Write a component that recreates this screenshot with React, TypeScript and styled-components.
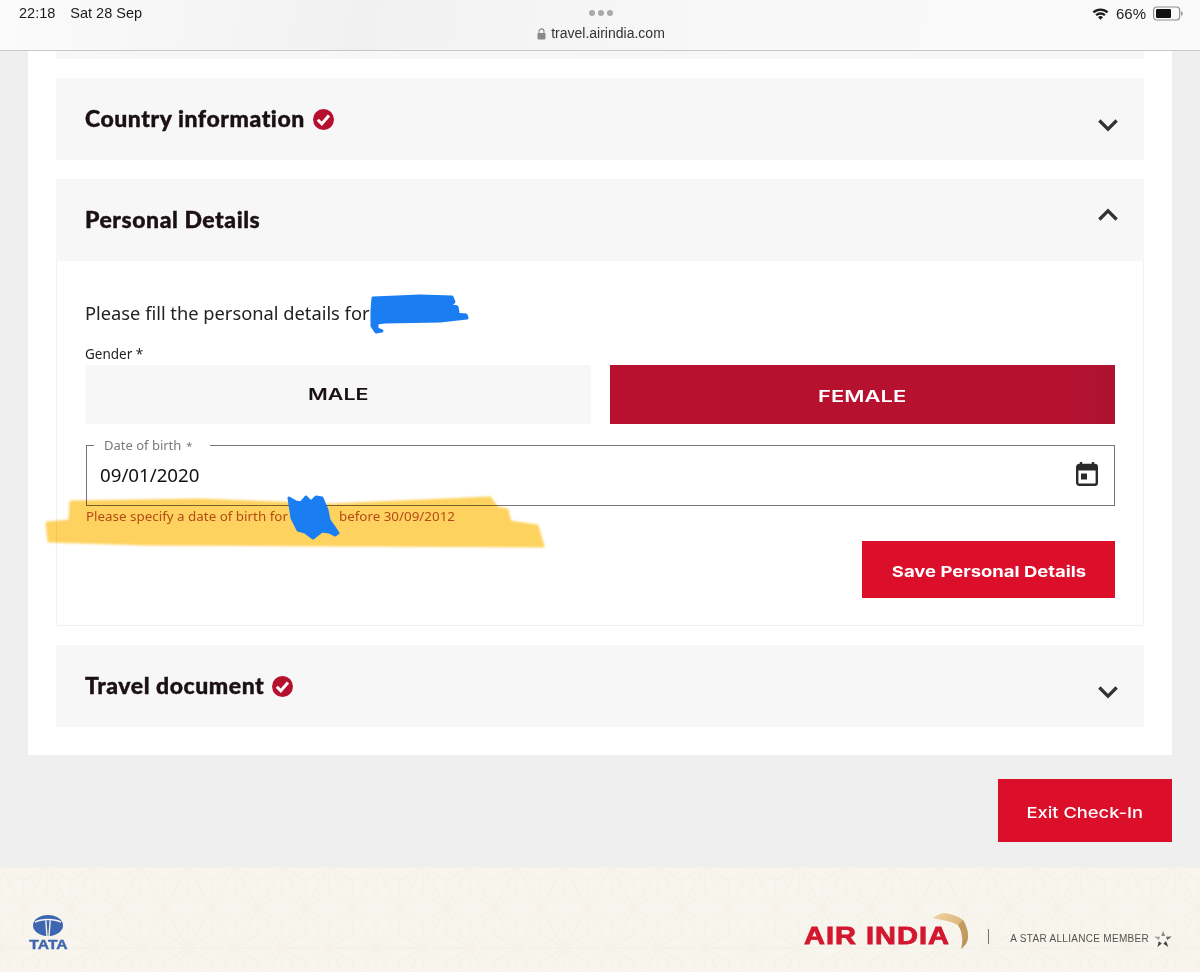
import { ReactNode } from 'react'
import styled, { createGlobalStyle } from 'styled-components'

const GlobalStyle = createGlobalStyle`
  html, body {
    margin: 0;
    padding: 0;
    background: #efefef;
  }
  * {
    box-sizing: border-box;
  }
`

// asanoha tile for the footer
const footerPattern = encodeURIComponent(
  `<svg xmlns="http://www.w3.org/2000/svg" width="47" height="81.4" viewBox="0 0 47 81.4"><g fill="none" stroke="#f5f1e8" stroke-width="1.3"><path d="M0 0H47M0 81.4H47M0 0L47 81.4M47 0L0 81.4"/><path d="M23.5 13.57L0 0M23.5 13.57L47 0M23.5 13.57V40.7M23.5 67.83L0 81.4M23.5 67.83L47 81.4M23.5 67.83V40.7M0 27.13V0M0 27.13L23.5 40.7M47 27.13V0M47 27.13L23.5 40.7M0 54.27V81.4M0 54.27L23.5 40.7M47 54.27V81.4M47 54.27L23.5 40.7"/></g></svg>`,
)

const Page = styled.div`
  position: relative;
  width: 1200px;
  height: 972px;
  overflow: hidden;
  display: flex;
  flex-direction: column;
  background: #efefef;
  font-family: 'Noto Sans', sans-serif;
`

const StatusBar = styled.header`
  height: 51px;
  flex: none;
  display: grid;
  grid-template-columns: 1fr auto 1fr;
  padding: 0 17px 0 19px;
  background: linear-gradient(100deg, #fbfbfb 0%, #f1f1f1 30%, #f8f8f8 60%, #fafafa 100%);
  border-bottom: 1px solid #c9c9c9;
  font-family: 'Liberation Sans', sans-serif;
  color: #1c1c1c;
`

const StatusLeft = styled.div`
  display: flex;
  gap: 15px;
  padding-top: 5px;
  font-size: 14.5px;
  line-height: 17px;
`

const AddressBlock = styled.div`
  display: flex;
  flex-direction: column;
  align-items: center;
  padding-top: 10px;
`

const Dots = styled.div`
  display: flex;
  gap: 3px;
  margin-bottom: 9px;
`

const Dot = styled.span`
  width: 6px;
  height: 6px;
  border-radius: 50%;
  background: #a9a9a9;
`

const Address = styled.div`
  display: flex;
  align-items: center;
  gap: 5px;
  font-size: 14px;
  line-height: 17px;
  color: #333;
`

const StatusRight = styled.div`
  display: flex;
  justify-content: flex-end;
  align-items: flex-start;
  gap: 5px;
  padding-top: 5px;
  font-size: 15px;
  line-height: 17px;
`

const WifiIcon = styled.svg`
  margin: 2px 2px 0 0;
`

const BatteryIcon = styled.svg`
  margin: 1px 0 0 2px;
`

const Main = styled.main`
  flex: none;
  height: 816px;
  padding: 0 28px;
  display: flex;
  flex-direction: column;
`

const Panel = styled.section`
  height: 704px;
  padding: 0 28px;
  background: #fff;
  display: flex;
  flex-direction: column;
  gap: 19px;
`

const ClippedItem = styled.div`
  height: 8px;
  background: #f7f7f7;
`

const Item = styled.div`
  display: flex;
  flex-direction: column;
`

const ItemHeader = styled.div`
  height: 82px;
  padding: 0 26px 0 29px;
  display: flex;
  align-items: center;
  justify-content: space-between;
  background: #f7f7f7;
`

const ItemTitle = styled.h2`
  margin: 0 0 3px;
  display: flex;
  align-items: center;
  gap: 8px;
  font-family: 'Lato', sans-serif;
  font-size: 23px;
  font-weight: 900;
  letter-spacing: 0.55px;
  color: #1b1012;
  -webkit-text-stroke: 0.4px #1b1012;
`

const BadgeIcon = styled.svg`
  margin-top: 4px;
`

const ChevronBox = styled.span<{ $up?: boolean }>`
  display: flex;
  margin-top: ${({ $up }) => ($up ? '-12px' : '12px')};
`

const ItemBody = styled.div`
  height: 365px;
  padding: 0 28px;
  border: 1px solid #f1f1f1;
  border-top: 0;
  display: flex;
  flex-direction: column;
`

const Intro = styled.p`
  margin: 40px 0 0;
  font-size: 18.3px;
  line-height: 24px;
  color: #222;
`

const FieldLabel = styled.div`
  margin-top: 20px;
  font-size: 13.5px;
  line-height: 18px;
  color: #222;
`

const GenderRow = styled.div`
  display: grid;
  grid-template-columns: 506px 505px;
  gap: 19px;
  margin-top: 2px;
`

const GenderButton = styled.div<{ $selected?: boolean }>`
  height: 59px;
  display: flex;
  align-items: center;
  justify-content: center;
  padding-top: ${({ $selected }) => ($selected ? '3px' : '0')};
  padding-bottom: ${({ $selected }) => ($selected ? '0' : '2px')};
  background: ${({ $selected }) => ($selected ? 'linear-gradient(90deg, #b81130, #b5112f 88%, #ad132f)' : '#f7f7f7')};
  color: ${({ $selected }) => ($selected ? '#fff' : '#1b1012')};
`

const WideLabel = styled.span<{ $size: number; $weight: number; $stretch: number }>`
  display: inline-block;
  font-family: 'Inter', sans-serif;
  font-size: ${({ $size }) => $size}px;
  font-weight: ${({ $weight }) => $weight};
  transform: scaleX(${({ $stretch }) => $stretch});
`

const DateField = styled.fieldset`
  margin: 14px 0 0 1px;
  padding: 0 16px 0 13px;
  height: 68px;
  border: 1px solid #777;
  border-radius: 0;
`

const DateLegend = styled.legend`
  margin-left: -6px;
  padding: 0 18px 0 10px;
  font-size: 13px;
  line-height: 14px;
  color: #7a7a7a;
`

const SmallStar = styled.span`
  margin-left: 5px;
  font-size: 11px;
`

const DateRow = styled.div`
  height: 42px;
  display: flex;
  align-items: center;
  justify-content: space-between;
`

const DateValue = styled.span`
  font-size: 18.7px;
  color: #111;
`

const ErrorText = styled.div`
  margin-top: 1px;
  margin-left: 1px;
  display: flex;
  font-size: 13.4px;
  line-height: 18px;
  color: #b85a3c;
`

const NameGap = styled.span`
  width: 51px;
`

const ActionRow = styled.div`
  display: flex;
  justify-content: flex-end;
  margin-top: 16px;
`

const PrimaryButton = styled.button<{ $width: number; $height: number }>`
  width: ${({ $width }) => $width}px;
  height: ${({ $height }) => $height}px;
  border: 0;
  padding: 3px 0 0;
  background: #dc0f2b;
  color: #fff;
`

const ExitRow = styled.div`
  display: flex;
  justify-content: flex-end;
  margin-top: 24px;
`

const Footer = styled.footer`
  flex: 1;
  padding: 0 28px;
  display: flex;
  align-items: flex-start;
  justify-content: space-between;
  background-color: #f8f5ee;
  background-image: url("data:image/svg+xml,${footerPattern}");
`

const TataLogo = styled.div`
  margin-top: 48px;
  width: 40px;
  display: flex;
  flex-direction: column;
  align-items: center;
`

const TataWord = styled.span`
  font-family: 'Liberation Sans', sans-serif;
  font-size: 13.5px;
  font-weight: 700;
  line-height: 12px;
  margin-top: 3px;
  color: #3f67b1;
  -webkit-text-stroke: 0.4px #3f67b1;
  transform: scaleX(1.16);
`

const Brand = styled.div`
  display: flex;
  align-items: center;
  margin-top: 46px;
`

const AirIndiaMark = styled.div`
  position: relative;
  display: flex;
  width: 164px;
  height: 40px;
  align-items: center;
`

const AirIndiaWord = styled.span`
  font-family: 'Liberation Sans', sans-serif;
  font-size: 23px;
  font-weight: 700;
  line-height: 24px;
  margin-top: 6px;
  letter-spacing: 0.8px;
  color: #d3172e;
  -webkit-text-stroke: 0.8px #d3172e;
  transform: scaleX(1.26);
  transform-origin: left center;
  white-space: nowrap;
`

const Swoosh = styled.svg`
  position: absolute;
  left: 127px;
  top: -3px;
`

const BrandDivider = styled.span`
  width: 1px;
  height: 15px;
  margin: 6px 21px 0 20px;
  background: #77736b;
`

const Alliance = styled.span`
  display: flex;
  align-items: center;
  gap: 5px;
  margin-top: 11px;
  font-family: 'Liberation Sans', sans-serif;
  font-size: 10px;
  letter-spacing: 0.3px;
  color: #55524d;
`

const ScribbleLayer = styled.svg`
  position: absolute;
  left: 0;
  top: 0;
  pointer-events: none;
`

const YellowMarks = styled.g`
  mix-blend-mode: multiply;
  filter: blur(1px);
`

const CheckBadge = () => (
  <BadgeIcon width="21" height="21" viewBox="0 0 21 21">
    <circle cx="10.5" cy="10.5" r="10.5" fill="#b5112f" />
    <path d="M4.8 10.8l4 4 7.2-8.2" fill="none" stroke="#fff" strokeWidth="3" />
  </BadgeIcon>
)

const Chevron = ({ up }: { up?: boolean }) => (
  <ChevronBox $up={up}>
    <svg width="20" height="13" viewBox="0 0 22 14">
      <path
        d={up ? 'M1.5 12.5L11 3l9.5 9.5' : 'M1.5 1.5L11 11l9.5-9.5'}
        fill="none"
        stroke="#333"
        strokeWidth="3.6"
      />
    </svg>
  </ChevronBox>
)

const Section = ({ title, done, up, children }: { title: string; done?: boolean; up?: boolean; children?: ReactNode }) => (
  <Item>
    <ItemHeader>
      <ItemTitle>
        {title}
        {done && <CheckBadge />}
      </ItemTitle>
      <Chevron up={up} />
    </ItemHeader>
    {children}
  </Item>
)

export default function App() {
  return (
    <Page>
      <GlobalStyle />
      <StatusBar>
        <StatusLeft>
          <span>22:18</span>
          <span>Sat 28 Sep</span>
        </StatusLeft>
        <AddressBlock>
          <Dots>
            <Dot />
            <Dot />
            <Dot />
          </Dots>
          <Address>
            <svg width="9" height="12" viewBox="0 0 9 12">
              <path d="M2 5V3.4a2.5 2.5 0 0 1 5 0V5" fill="none" stroke="#8a8a8a" strokeWidth="1.1" />
              <rect x="0.5" y="5" width="8" height="6.5" rx="1" fill="#8a8a8a" />
            </svg>
            travel.airindia.com
          </Address>
        </AddressBlock>
        <StatusRight>
          <WifiIcon width="17" height="13" viewBox="0 0 17 13">
            <path d="M0.6 4.6a11.4 11.4 0 0 1 15.8 0l-1.6 1.7a9 9 0 0 0-12.6 0z" fill="#1c1c1c" />
            <path d="M3.3 7.4a7.5 7.5 0 0 1 10.4 0l-1.6 1.7a5.2 5.2 0 0 0-7.2 0z" fill="#1c1c1c" />
            <path d="M6 10.2a3.7 3.7 0 0 1 5 0l-2.5 2.6z" fill="#1c1c1c" />
          </WifiIcon>
          <span>66%</span>
          <BatteryIcon width="30" height="15" viewBox="0 0 30 15">
            <rect x="0.6" y="1" width="26" height="13" rx="3" fill="none" stroke="#8e8e8e" strokeWidth="1.2" />
            <rect x="3" y="3" width="15" height="9" rx="1.2" fill="#111" />
            <rect x="28" y="5.5" width="1.5" height="4" rx="0.7" fill="#8e8e8e" />
          </BatteryIcon>
        </StatusRight>
      </StatusBar>

      <Main>
        <Panel>
          <ClippedItem />
          <Section title="Country information" done />
          <Section title="Personal Details" up>
            <ItemBody>
              <Intro>Please fill the personal details for</Intro>
              <FieldLabel>Gender *</FieldLabel>
              <GenderRow>
                <GenderButton>
                  <WideLabel $size={16.5} $weight={600} $stretch={1.3}>MALE</WideLabel>
                </GenderButton>
                <GenderButton $selected>
                  <WideLabel $size={16.5} $weight={600} $stretch={1.33}>FEMALE</WideLabel>
                </GenderButton>
              </GenderRow>
              <DateField>
                <DateLegend>
                  Date of birth<SmallStar>*</SmallStar>
                </DateLegend>
                <DateRow>
                  <DateValue>09/01/2020</DateValue>
                  <svg width="22" height="24" viewBox="0 0 22 24">
                    <path d="M5 0v3M17 0v3" stroke="#2a2a2a" strokeWidth="2.4" />
                    <rect x="1.2" y="3" width="19.6" height="19.8" rx="2" fill="none" stroke="#2a2a2a" strokeWidth="2.4" />
                    <rect x="1.2" y="3" width="19.6" height="5.5" fill="#2a2a2a" />
                    <rect x="5" y="11.5" width="6" height="6" fill="#2a2a2a" />
                  </svg>
                </DateRow>
              </DateField>
              <ErrorText>
                <span>Please specify a date of birth for</span>
                <NameGap />
                <span>before 30/09/2012</span>
              </ErrorText>
              <ActionRow>
                <PrimaryButton $width={253} $height={57}>
                  <WideLabel $size={15} $weight={700} $stretch={1.23}>Save Personal Details</WideLabel>
                </PrimaryButton>
              </ActionRow>
            </ItemBody>
          </Section>
          <Section title="Travel document" done />
        </Panel>
        <ExitRow>
          <PrimaryButton $width={174} $height={63}>
            <WideLabel $size={15} $weight={450} $stretch={1.22}>Exit Check-In</WideLabel>
          </PrimaryButton>
        </ExitRow>
      </Main>

      <Footer>
        <TataLogo>
          <svg width="30" height="21" viewBox="0 0 30 21">
            <ellipse cx="15" cy="10.5" rx="15" ry="10.5" fill="#3f67b1" />
            <path d="M2 7.2C8 3.6 22 3.6 28 7.2" fill="none" stroke="#f8f5ee" strokeWidth="1.4" />
            <path d="M12.8 5.5L14 21M17.2 5.5L16 21" fill="none" stroke="#f8f5ee" strokeWidth="1.4" />
          </svg>
          <TataWord>TATA</TataWord>
        </TataLogo>
        <Brand>
          <AirIndiaMark>
            <AirIndiaWord>AIR INDIA</AirIndiaWord>
            <Swoosh width="40" height="42" viewBox="0 0 40 42">
              <defs>
                <linearGradient id="gold" x1="0" y1="0" x2="1" y2="1">
                  <stop offset="0" stopColor="#efd3a4" />
                  <stop offset="0.6" stopColor="#dcb274" />
                  <stop offset="1" stopColor="#a9854d" />
                </linearGradient>
              </defs>
              <path
                d="M2 8C6 5 10 3 14 3c6 1 13 3 18 7 4 7 5 12 5 17 0 5-3 9-7 12 2-6 2-17-3-24C20 11 10 10 2 8z"
                fill="url(#gold)"
              />
              <path d="M27 15l5-5c4 7 5 12 5 17l-6 1c0-4-1-9-4-13z" fill="#c49a5e" />
            </Swoosh>
          </AirIndiaMark>
          <BrandDivider />
          <Alliance>
            A STAR ALLIANCE MEMBER
            <svg width="18" height="16" viewBox="0 0 18 16">
              <path d="M9 0l2.2 5H7.4z" fill="#8a867e" />
              <path d="M18 5.5l-4.6 3.6-1.6-3.4z" fill="#6d6a63" />
              <path d="M14.4 16l-5-3.2 2.6-2.8z" fill="#45423d" />
              <path d="M3.4 16l1.4-5.8 3 2.4z" fill="#45423d" />
              <path d="M0 5.5l6.2.2-1.4 3.4z" fill="#a5a19a" />
            </svg>
          </Alliance>
        </Brand>
      </Footer>

      <ScribbleLayer width="1200" height="972" viewBox="0 0 1200 972">
        <YellowMarks>
          <path
            d="M71 502L200 500 330 505 490 498 497 508 507 510 510 522 537 526 543 546 340 545 145 544 49 541 47 523 70 521z"
            fill="#fdd25f"
            stroke="#fdd25f"
            strokeWidth="3"
            strokeLinejoin="round"
          />
        </YellowMarks>
        <g fill="#1a7df2" stroke="#1a7df2" strokeLinecap="round" strokeLinejoin="round" strokeWidth="3">
          <path d="M373 298L420 296 452 297 454 302 451 305 457 307 458 312 455 314 466 315 467 318 440 321 385 322 377 323 377 329 382 331 376 332 372 326 372 310z" />
          <path d="M289 498L296 502 301 503 306 497 311 502 316 497 322 498 327 510 329 520 334 527 338 533 335 535 329 532 322 531 313 538 305 532 298 530 292 518z" />
        </g>
      </ScribbleLayer>
    </Page>
  )
}
